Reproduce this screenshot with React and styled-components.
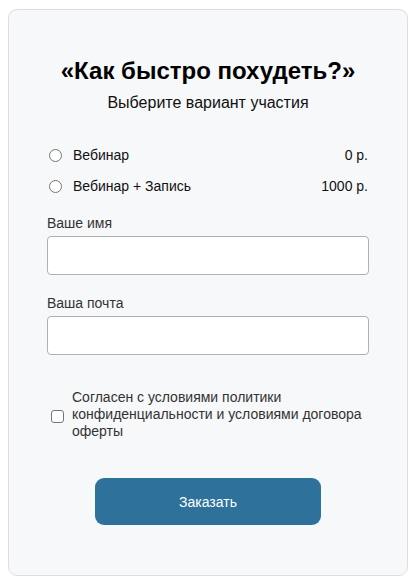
import React from "react";
import styled, { createGlobalStyle } from "styled-components";

const GlobalStyle = createGlobalStyle`
  html, body {
    margin: 0;
    padding: 0;
    background: #ffffff;
    font-family: "Liberation Sans", Arial, sans-serif;
    color: #111;
  }
  * { box-sizing: border-box; }
`;

const Page = styled.div`
  padding: 9px 9px 11px 8px;
`;

const Card = styled.form`
  display: flex;
  flex-direction: column;
  height: 567px;
  padding: 45px 38px 0 38px;
  background: #f7f8fa;
  border: 1px solid #dcdde3;
  border-radius: 9px;
`;

const Title = styled.h1`
  margin: 0;
  font-size: 24px;
  line-height: 32px;
  font-weight: 700;
  text-align: center;
  color: #000;
`;

const Subtitle = styled.p`
  margin: 6px 0 0;
  font-size: 16px;
  line-height: 20px;
  text-align: center;
  color: #111;
`;

const Options = styled.div`
  display: flex;
  flex-direction: column;
  gap: 15px;
  margin-top: 34px;
`;

const Option = styled.label`
  display: flex;
  align-items: center;
  height: 16px;
  font-size: 14px;
  color: #111;
`;

const Radio = styled.span`
  width: 13px;
  height: 13px;
  margin: 0 11px 0 2px;
  border: 1px solid #767676;
  border-radius: 50%;
  background: #fff;
`;

const OptionName = styled.span`
  flex: 1;
`;

const Price = styled.span`
  padding-right: 1px;
`;

const Field = styled.div`
  display: flex;
  flex-direction: column;
  margin-top: ${(p) => p.top}px;
`;

const FieldLabel = styled.label`
  font-size: 14px;
  line-height: 16px;
  color: #333;
  margin-bottom: 5px;
`;

const Input = styled.input`
  height: 39px;
  width: 100%;
  border: 1px solid #b0b0b0;
  border-radius: 4px;
  background: #fff;
  padding: 0 10px;
  font-size: 14px;
  font-family: inherit;
  outline: none;
`;

const Agree = styled.label`
  display: flex;
  align-items: center;
  margin-top: 34px;
  padding-left: 4px;
`;

const Box = styled.span`
  flex: none;
  width: 13px;
  height: 13px;
  margin-right: 8px;
  margin-top: 4px;
  border: 1px solid #767676;
  border-radius: 3px;
  background: #fff;
`;

const AgreeText = styled.span`
  font-size: 14px;
  line-height: 17px;
  color: #333;
`;

const SubmitRow = styled.div`
  display: flex;
  justify-content: center;
  margin-top: 38px;
`;

const Submit = styled.button`
  width: 226px;
  height: 47px;
  border: none;
  border-radius: 9px;
  background: #2e729c;
  color: #fff;
  font-size: 14px;
  font-family: inherit;
  cursor: pointer;
`;

export default function App() {
  return (
    <Page>
      <GlobalStyle />
      <Card onSubmit={(e) => e.preventDefault()}>
        <Title>«Как быстро похудеть?»</Title>
        <Subtitle>Выберите вариант участия</Subtitle>
        <Options>
          <Option>
            <Radio />
            <OptionName>Вебинар</OptionName>
            <Price>0 р.</Price>
          </Option>
          <Option>
            <Radio />
            <OptionName>Вебинар + Запись</OptionName>
            <Price>1000 р.</Price>
          </Option>
        </Options>
        <Field top={21}>
          <FieldLabel>Ваше имя</FieldLabel>
          <Input type="text" />
        </Field>
        <Field top={20}>
          <FieldLabel>Ваша почта</FieldLabel>
          <Input type="email" />
        </Field>
        <Agree>
          <Box />
          <AgreeText>
            Согласен с условиями политики конфиденциальности и условиями договора оферты
          </AgreeText>
        </Agree>
        <SubmitRow>
          <Submit type="submit">Заказать</Submit>
        </SubmitRow>
      </Card>
    </Page>
  );
}
